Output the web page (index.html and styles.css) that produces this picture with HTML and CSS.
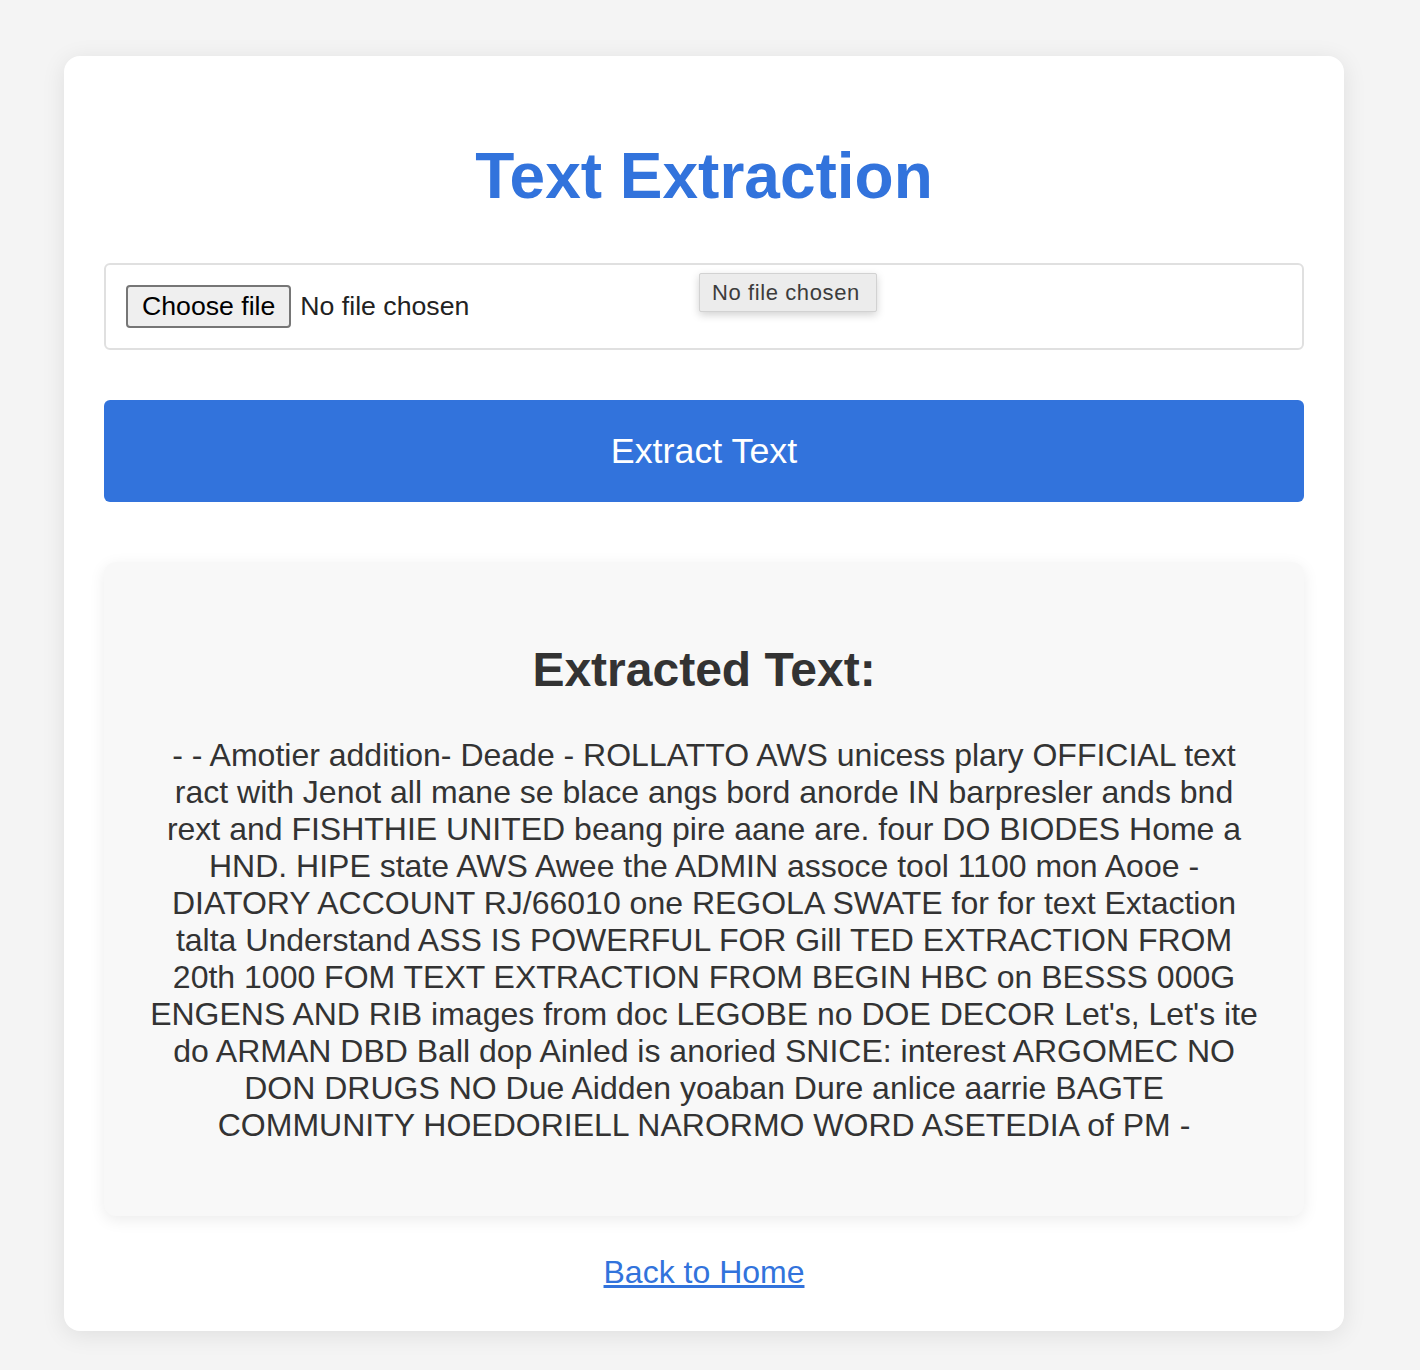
FILE: index.html
```html
<!DOCTYPE html>
<html lang="en">
<head>
<meta charset="utf-8">
<title>Text Extraction</title>
<link rel="stylesheet" href="styles.css">
</head>
<body>
<div class="card">
  <h1 class="title">Text Extraction</h1>
  <form class="form">
    <label class="file-field">
      <span class="file-btn">Choose file</span><span class="file-name">No file chosen</span>
      <span class="tooltip">No file chosen</span>
    </label>
    <button class="extract-btn" type="button">Extract Text</button>
  </form>
  <div class="result">
    <h2 class="result-title">Extracted Text:</h2>
    <p class="result-text">- - Amotier addition- Deade - ROLLATTO AWS unicess plary OFFICIAL text ract with Jenot all mane se blace angs bord anorde IN barpresler ands bnd rext and FISHTHIE UNITED beang pire aane are. four DO BIODES Home a HND. HIPE state AWS Awee the ADMIN assoce tool 1100 mon Aooe - DIATORY ACCOUNT RJ/66010 one REGOLA SWATE for for text Extaction talta Understand ASS IS POWERFUL FOR Gill TED EXTRACTION FROM 20th 1000 FOM TEXT EXTRACTION FROM BEGIN HBC on BESSS 000G ENGENS AND RIB images from doc LEGOBE no DOE DECOR Let's, Let's ite do ARMAN DBD Ball dop Ainled is anoried SNICE: interest ARGOMEC NO DON DRUGS NO Due Aidden yoaban Dure anlice aarrie BAGTE COMMUNITY HOEDORIELL NARORMO WORD ASETEDIA of PM -</p>
  </div>
  <div class="back"><a class="back-link" href="#">Back to Home</a></div>
</div>
</body>
</html>
```

FILE: styles.css
```css
html, body {
  margin: 0;
  padding: 0;
}
body {
  background: #f4f4f4;
  font-family: "Liberation Sans", Arial, sans-serif;
  padding: 56px 0 38px 64px;
}
.card {
  box-sizing: border-box;
  width: 1280px;
  background: #fff;
  border-radius: 16px;
  padding: 40px;
  box-shadow: 0 4px 24px rgba(0, 0, 0, 0.09);
}
.title {
  margin: 43px 0 50px;
  font-size: 64px;
  font-weight: bold;
  line-height: normal;
  color: #3273dc;
  text-align: center;
}
.form {
  margin: 0;
}
.file-field {
  position: relative;
  display: flex;
  align-items: center;
  box-sizing: border-box;
  width: 100%;
  padding: 20px;
  border: 2px solid #e0e0e0;
  border-radius: 6px;
  font-size: 26.67px;
}
.file-btn {
  display: inline-block;
  padding: 4px 14px;
  border: 2px solid #767676;
  border-radius: 4px;
  background: #efefef;
  color: #000;
  line-height: normal;
}
.file-name {
  margin-left: 9px;
  color: #222;
}
.tooltip {
  position: absolute;
  left: 593px;
  top: 8px;
  box-sizing: border-box;
  width: 178px;
  height: 39px;
  padding: 0 12px;
  display: flex;
  align-items: center;
  background: #ececec;
  border: 1px solid #d2d2d2;
  border-radius: 2px;
  box-shadow: 0 3px 8px rgba(0, 0, 0, 0.18);
  color: #3c3c3c;
  font-size: 22px;
  letter-spacing: 0.6px;
  white-space: nowrap;
}
.extract-btn {
  display: block;
  width: 100%;
  margin-top: 50px;
  padding: 30px 0;
  border: none;
  border-radius: 6px;
  background: #3273dc;
  color: #fff;
  font-family: "Liberation Sans", Arial, sans-serif;
  font-size: 35.8px;
  line-height: 42px;
}
.result {
  margin-top: 60px;
  padding: 40px;
  background: #f8f8f8;
  border-radius: 12px;
  box-shadow: 0 4px 16px rgba(0, 0, 0, 0.08);
  text-align: center;
}
.result-title {
  margin: 40px 0;
  font-size: 48px;
  font-weight: bold;
  color: #333;
}
.result-text {
  margin: 0 0 32px;
  font-size: 32px;
  color: #333;
}
.back {
  margin-top: 38px;
  text-align: center;
  font-size: 32px;
}
.back-link {
  color: #3273dc;
  text-decoration: underline;
}
```
